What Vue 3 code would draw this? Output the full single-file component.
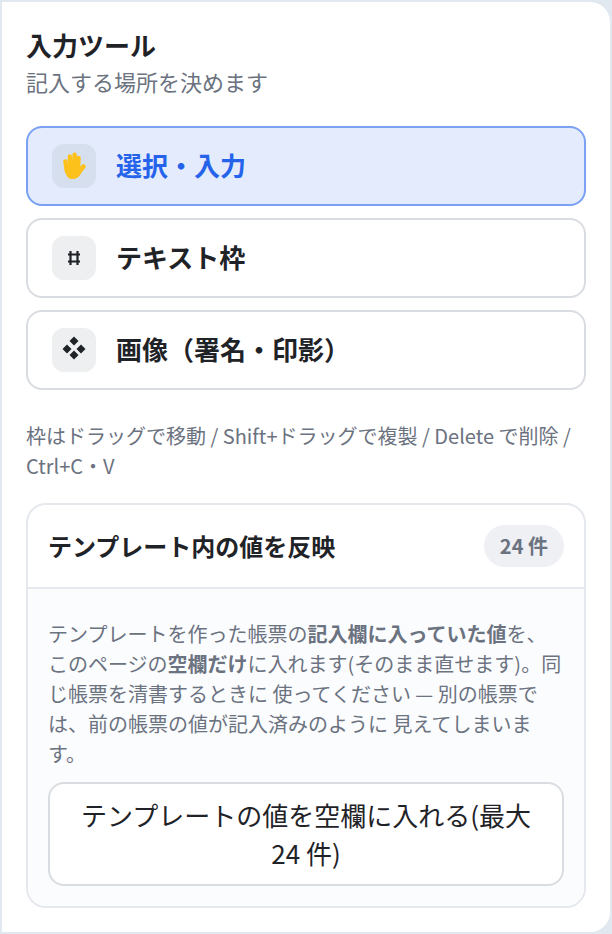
<script setup>
const tools = [
  { id: 'select', label: '選択・入力', active: true },
  { id: 'text', label: 'テキスト枠', active: false },
  { id: 'image', label: '画像（署名・印影）', active: false },
]
</script>

<template>
  <div class="panel">
    <h2 class="title">入力ツール</h2>
    <p class="sub">記入する場所を決めます</p>

    <div class="tools">
      <button v-for="t in tools" :key="t.id" class="tool" :class="{ active: t.active }">
        <span class="tool-icon">
          <svg v-if="t.id === 'select'" viewBox="0 0 44 44" width="44" height="44">
            <g stroke="#fcc21b" stroke-linecap="round" fill="none">
              <path d="M14.8 27L13.4 17.5M18.6 24L17.8 12.5M22.5 24L22.6 10.8M26 25L26.6 14" stroke-width="4.4" />
              <path d="M26.5 29L31.5 22.5" stroke-width="4.5" />
            </g>
            <path d="M12.5 22H28.5V30C27 34 23 35.5 19.5 35C15 34.5 13 30 12.5 22Z" fill="#fcc21b" />
          </svg>
          <svg v-else-if="t.id === 'text'" viewBox="0 0 44 44" width="44" height="44">
            <path d="M18.5 15V29M25.5 15V29M16 18.5H28M16 25.5H28" stroke="#1f2328" stroke-width="2.2" fill="none" />
          </svg>
          <svg v-else viewBox="0 0 44 44" width="44" height="44">
            <path d="M22 8.5L26.5 13L22 17.5L17.5 13ZM22 22.5L26.5 27L22 31.5L17.5 27ZM15 16.5L19.5 21L15 25.5L10.5 21ZM29 16.5L33.5 21L29 25.5L24.5 21Z" fill="#1f2328" />
          </svg>
        </span>
        <span class="tool-label">{{ t.label }}</span>
      </button>
    </div>

    <p class="hint">枠はドラッグで移動 / Shift+ドラッグで複製 / Delete で削除 / Ctrl+C・V</p>

    <section class="card">
      <div class="card-head">
        <span class="card-title">テンプレート内の値を反映</span>
        <span class="badge">24 件</span>
      </div>
      <div class="card-body">
        <p class="desc">
          テンプレートを作った帳票の<b>記入欄に入っていた値</b>を、このページの<b>空欄だけ</b>に入れます(そのまま直せます)。同じ帳票を清書するときに 使ってください — 別の帳票では、前の帳票の値が記入済みのように 見えてしまいます。
        </p>
        <button class="apply">テンプレートの値を空欄に入れる(最大 24 件)</button>
      </div>
    </section>
  </div>
</template>

<style>
html, body {
  margin: 0;
  background: #e2e8f0;
}
</style>

<style scoped>
.panel {
  box-sizing: border-box;
  width: 608px;
  height: 930px;
  margin: 2px 0 0 2px;
  background: #fff;
  border-radius: 0 20px 20px 0;
  padding: 28px 0 0 24px;
  font-family: "Noto Sans CJK JP", "Noto Sans", sans-serif;
  color: #1f2328;
}
.title {
  margin: 0;
  font-size: 26px;
  line-height: 30px;
  font-weight: 700;
}
.sub {
  margin: 4px 0 0;
  font-size: 22px;
  line-height: 34px;
  color: #6b7280;
}
.tools {
  display: flex;
  flex-direction: column;
  gap: 12px;
  width: 560px;
  margin-top: 28px;
}
.tool {
  box-sizing: border-box;
  display: flex;
  align-items: center;
  gap: 20px;
  height: 80px;
  padding: 0 24px;
  background: #fff;
  border: 2px solid #d9dde1;
  border-radius: 16px;
  font: inherit;
  font-size: 26px;
  font-weight: 700;
  color: #1f2328;
}
.tool.active {
  background: #e4ebfd;
  border-color: #7aa1f2;
  color: #2563eb;
}
.tool-label {
  padding-bottom: 4px;
}
.tool-icon {
  display: block;
  width: 44px;
  height: 44px;
  border-radius: 12px;
  background: #edeff0;
}
.active .tool-icon {
  background: #d6dfed;
}
.hint {
  width: 560px;
  margin: 31px 0 0;
  font-size: 20px;
  line-height: 30px;
  color: #6b7280;
}
.card {
  width: 560px;
  box-sizing: border-box;
  margin-top: 22px;
  border: 2px solid #e5e8ed;
  border-radius: 20px;
  overflow: hidden;
}
.card-head {
  display: flex;
  align-items: center;
  justify-content: space-between;
  height: 82px;
  padding: 0 20px;
  border-bottom: 2px solid #e5e8ed;
}
.card-title {
  padding-bottom: 2px;
  font-size: 24px;
  font-weight: 700;
}
.badge {
  padding: 0 16px;
  line-height: 42px;
  border-radius: 21px;
  background: #eef0f4;
  font-size: 20px;
  font-weight: 700;
  color: #6b7280;
}
.card-body {
  padding: 30px 20px 20px;
  background: #fbfcfe;
}
.desc {
  margin: 0;
  font-size: 20px;
  line-height: 30px;
  color: #6b7280;
}
.apply {
  display: block;
  box-sizing: border-box;
  width: 100%;
  margin-top: 13px;
  padding: 0 24px;
  height: 104px;
  background: #fff;
  border: 2px solid #d9dde1;
  border-radius: 16px;
  font: inherit;
  font-size: 26px;
  line-height: 38px;
  color: #1f2328;
}
</style>
